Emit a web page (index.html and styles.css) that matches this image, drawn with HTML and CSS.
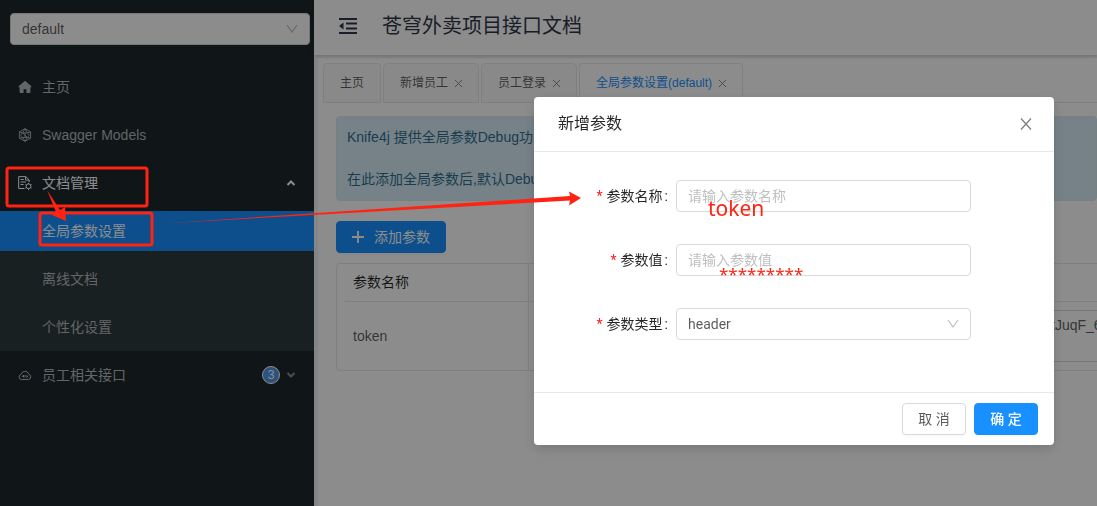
FILE: index.html
```html
<!DOCTYPE html>
<html lang="zh-CN">
<head>
<meta charset="utf-8">
<title>苍穹外卖项目接口文档</title>
<link rel="stylesheet" href="styles.css">
</head>
<body>
<div class="app">
  <aside class="sidebar">
    <div class="picker">
      <select class="group-select" aria-label="分组"><option>default</option></select>
      <svg class="chevron" viewBox="0 0 12 10" width="12" height="10"><path d="M1 1l5 7 5-7" fill="none" stroke="#bfbfbf" stroke-width="1.2"/></svg>
    </div>
    <nav class="menu">
      <a class="item" href="#home"><svg class="icon" viewBox="0 0 14 14"><path fill="currentColor" d="M7 .8L.6 6.300v1h1V12.200q0 .8.8.8H5.600V9.200h2.800V13h3.200q.8 0 .8-.8V7.300h1v-1z"/></svg>主页</a>
      <a class="item" href="#models"><svg class="icon" viewBox="0 0 14 14" fill="none" stroke="currentColor" stroke-width="0.9"><path d="M7 .7l5.600 3.200v6.300L7 13.300 1.400 10.200V3.900zM1.400 3.900l3.200 1L7 .7l2.400 4.200 3.200-1M4.600 4.900h4.800l2 2.300-2 2.300H4.600l-2-2.300zM4.600 4.900l4.800 4.600M4.600 9.500L7 13.300l2.400-3.800M1.400 10.200l3.200-.7M12.600 10.200l-3.200-.7M7 4.900v4.600"/></svg>Swagger Models</a>
      <a class="item open" href="#docs"><svg class="icon" viewBox="0 0 14 14" fill="none" stroke="currentColor"><path d="M6.500 12.500H.7V.6h7.100l3.400 3.300V6M7.600.6v3.500h3.500M2.600 3.500h3.200M2.600 6h5.400M2.600 8.500h3"/><circle cx="10.500" cy="10.300" r="2.400"/><path d="M10.500 6.800v1.200M10.500 12.600v1.200M7.400 8.500l1 .6M12.600 11.500l1 .6M7.400 12.100l1-.6M12.600 9.100l1-.6"/></svg><span class="grow">文档管理</span><svg class="arrow" viewBox="0 0 10 10"><path d="M1.500 7L5 3.500 8.500 7" fill="none" stroke="currentColor" stroke-width="2"/></svg></a>
      <div class="submenu">
        <a class="item sub active" href="#global">全局参数设置</a>
        <a class="item sub" href="#offline">离线文档</a>
        <a class="item sub" href="#custom">个性化设置</a>
      </div>
      <a class="item" href="#employee"><svg class="icon" viewBox="0 0 14 14" fill="none" stroke="currentColor"><path d="M3.300 11.500a2.600 2.600 0 01-.2-5.100 4 4 0 017.700-.3 2.800 2.800 0 01-.2 5.400zM4 9l1.500-2v2.500M7 7v2.500M8.500 7.500l1.500 2M10 7.500l-1.500 2"/></svg><span class="grow">员工相关接口</span><span class="badge">3</span><svg class="arrow dim" viewBox="0 0 10 10"><path d="M1.500 3L5 6.500 8.500 3" fill="none" stroke="currentColor" stroke-width="2"/></svg></a>
    </nav>
  </aside>
  <div class="main">
    <header class="header">
      <button class="fold" aria-label="收起菜单"><svg viewBox="0 0 18 16" width="18" height="16"><path d="M0 0h18v2H0zM7 4.600h11v2H7zM7 9.400h11v2H7zM0 14h18v2H0zM0 8l4.500-3.500v7z" fill="currentColor"/></svg></button>
      <h1 class="title">苍穹外卖项目接口文档</h1>
    </header>
    <main class="content">
      <div class="tabs">
        <div class="tab">主页</div>
        <div class="tab">新增员工<button class="x" aria-label="关闭"><svg viewBox="0 0 10 10"><path d="M1 1l8 8M9 1L1 9"/></svg></button></div>
        <div class="tab">员工登录<button class="x" aria-label="关闭"><svg viewBox="0 0 10 10"><path d="M1 1l8 8M9 1L1 9"/></svg></button></div>
        <div class="tab current">全局参数设置(default)<button class="x" aria-label="关闭"><svg viewBox="0 0 10 10"><path d="M1 1l8 8M9 1L1 9"/></svg></button></div>
        <div class="rest"></div>
      </div>
      <div class="page">
        <div class="alert"><p>Knife4j 提供全局参数Debug功能</p><p>在此添加全局参数后,默认Debug</p></div>
        <button class="btn primary add"><svg viewBox="0 0 12 12" width="12" height="12"><path d="M6 0v12M0 6h12" stroke="currentColor" stroke-width="1.800"/></svg>添加参数</button>
        <div class="table-box">
          <table class="table">
            <thead><tr><th class="name">参数名称</th><th></th></tr></thead>
            <tbody><tr><td class="name">token</td><td><textarea class="value" aria-label="参数值">tJuqF_6</textarea></td></tr></tbody>
          </table>
        </div>
      </div>
    </main>
  </div>
</div>
<div class="mask">
  <form class="modal" role="dialog" aria-labelledby="dlg">
    <div class="modal-head"><h2 id="dlg">新增参数</h2><button type="button" class="x big" aria-label="关闭"><svg viewBox="0 0 12 12"><path d="M1 .5l10 11M11 .5l-10 11"/></svg></button></div>
    <div class="modal-body">
      <div class="row"><label for="n"><i>*</i>参数名称<b>:</b></label><input id="n" class="field" placeholder="请输入参数名称"></div>
      <div class="row"><label for="v"><i>*</i>参数值<b>:</b></label><input id="v" class="field" placeholder="请输入参数值"></div>
      <div class="row"><label for="t"><i>*</i>参数类型<b>:</b></label><div class="picker-field"><select id="t" class="field"><option>header</option></select><svg class="chevron" viewBox="0 0 12 10" width="12" height="10"><path d="M1 1l5 7 5-7" fill="none" stroke="#bfbfbf" stroke-width="1.200"/></svg></div></div>
    </div>
    <div class="modal-foot"><button type="button" class="btn">取 消</button><button type="button" class="btn primary strong">确 定</button></div>
  </form>
</div>
<svg class="marks" width="1097" height="506" viewBox="0 0 1097 506" aria-hidden="true">
  <g fill="none" stroke="#ff2313" stroke-width="3"><rect x="7" y="168" width="140" height="38" rx="2"/><rect x="40" y="213" width="112" height="32" rx="2"/></g>
  <path fill="#ff2313" d="M47 190l13 20 5-3 1 14-14-6 4-3zM163 223.500L570 196l-1-4.500L581 198l-12 7.500 1-5z"/>
  <text class="note" x="708" y="216">token</text>
  <text class="stars" x="719" y="280">*********</text>
</svg>
</body>
</html>
```
FILE: styles.css
```css
* { box-sizing: border-box; }
body {
  margin: 0;
  overflow: hidden;
  font: 14px/21px "Liberation Sans", "Noto Sans CJK SC", sans-serif;
  color: rgba(0, 0, 0, .65);
}
button, input, select, textarea { font: inherit; color: inherit; margin: 0; }
h1, h2, p { margin: 0; font-weight: 400; }
a { color: inherit; text-decoration: none; }
.app { display: flex; min-height: 100vh; background: #f0f2f5; }

.sidebar { flex: 0 0 314px; background: #1e282c; color: #b4b8ba; }
.picker { position: relative; margin: 13px 4px 22px 10px; }
.group-select {
  display: block; width: 100%; height: 32px; padding: 0 11px;
  appearance: none; background: #fff; border: 1px solid #d9d9d9; border-radius: 4px;
  color: rgba(0, 0, 0, .65);
}
.chevron { position: absolute; right: 12px; top: 11px; pointer-events: none; }
.item { display: flex; align-items: center; height: 40px; margin: 0 0 8px; padding: 0 18px; }
.icon { flex: none; width: 14px; height: 14px; margin-right: 10px; }
.grow { flex: 1; }
.arrow { width: 10px; height: 10px; }
.dim { opacity: .7; }
.open { color: #fff; margin-bottom: 0; }
.submenu { padding: 8px 0 4px; margin-bottom: 4px; background: linear-gradient(#1e282c 8px, #2f3b3f 8px); }
.sub { padding-left: 42px; }
.sub:last-child { margin-bottom: 0; }
.active { background: #1890ff; color: #fff; }
.badge {
  width: 18px; height: 18px; margin-right: 6px; border: 1px solid #fff; border-radius: 9px;
  background: #5098e6; color: #fff; font-size: 12px; line-height: 16px; text-align: center;
}

.main { flex: 1; min-width: 0; display: flex; flex-direction: column; }
.header {
  display: flex; align-items: center; gap: 25px; height: 55px; padding: 0 25px 4px;
  background: #fff; box-shadow: 0 1px 4px rgba(0, 21, 41, .2); position: relative;
}
.fold { display: flex; padding: 0; border: 0; background: none; color: #303748; }
.title { font-size: 20px; line-height: 28px; color: #303748; white-space: nowrap; }
.content { flex: 1; margin: 3px 0 0 4px; background: #fff; overflow: hidden; }
.tabs { display: flex; gap: 2px; padding: 5px 0 0 5px; font-size: 12px; white-space: nowrap; }
.tab {
  display: flex; align-items: center; gap: 6px; height: 40px; min-width: 58px; padding: 0 15px 0 16px;
  border: 1px solid #e8e8e8; border-radius: 4px 4px 0 0; background: #fafafa;
}
.current { background: #fff; border-bottom-color: #fff; color: #1890ff; }
.rest { flex: 1; border-bottom: 1px solid #e8e8e8; margin-left: -2px; }
.x { display: flex; padding: 0; border: 0; background: none; color: #808080; }
.x svg { width: 9px; height: 9px; stroke: currentColor; fill: none; }
.page { padding: 13px 0 0 18px; }
.alert {
  display: flex; flex-direction: column; gap: 21px; padding: 10px; white-space: nowrap;
  border: 1px solid #d6e9f2; border-radius: 4px; background: #d9edf7; color: #31708f;
}
.btn {
  display: flex; align-items: center; justify-content: center; height: 32px; min-width: 64px; padding: 0 15px;
  border: 1px solid #d9d9d9; border-radius: 4px; background: #fff;
  box-shadow: 0 2px 0 rgba(0, 0, 0, .02);
}
.primary { background: #1890ff; border-color: #1890ff; color: #fff; }
.add { gap: 10px; margin: 20px 0 10px; }
.table-box { width: 900px; border: 1px solid #e8e8e8; border-radius: 4px; }
.table { width: 100%; border-collapse: separate; border-spacing: 0; table-layout: fixed; }
.table th, .table td { padding: 8px 16px; text-align: left; font-weight: 400; }
.table th { height: 38px; border-bottom: 1px solid #e8e8e8; color: rgba(0, 0, 0, .85); }
.table .name { width: 192px; border-right: 1px solid #e8e8e8; }
.table th.name {
  border-bottom: 0; padding-bottom: 9px;
  background: linear-gradient(#e8e8e8, #e8e8e8) 8px 100% / 100% 1px no-repeat;
}
.value {
  display: block; width: 100%; height: 52px; padding: 4px 0 0 505px; resize: none; overflow: hidden;
  border: 1px solid #d9d9d9; border-radius: 4px; background: #fff; white-space: nowrap;
}

.mask {
  position: fixed; inset: 0; display: flex; justify-content: flex-end; align-items: flex-start;
  padding: 97px 43px 0 0; background: rgba(0, 0, 0, .45);
}
.modal {
  width: 520px; background: #fff; border-radius: 4px; box-shadow: 0 4px 12px rgba(0, 0, 0, .15);
  font-family: Roboto, "Noto Sans CJK SC", sans-serif;
}
.modal-head {
  display: flex; align-items: center; justify-content: space-between; height: 55px; padding: 0 22px 0 24px;
  border-bottom: 1px solid #e8e8e8;
}
.modal-head h2 { font-size: 16px; line-height: 22px; color: rgba(0, 0, 0, .85); }
.big svg { width: 12px; height: 12px; stroke-width: 1.3; }
.modal-body { display: flex; flex-direction: column; gap: 32px; padding: 28px 83px 52px 24px; }
.row { display: grid; grid-template-columns: 1fr 295px; align-items: center; gap: 8px; }
.row label { text-align: right; color: rgba(0, 0, 0, .85); }
.row i { margin-right: 4px; color: #f5222d; font-style: normal; }
.row b { margin-left: 2px; font-weight: 400; }
.field {
  display: block; width: 100%; height: 32px; padding: 0 11px; appearance: none;
  border: 1px solid #d9d9d9; border-radius: 4px; background: #fff;
}
.field::placeholder { color: #bfbfbf; }
.picker-field { position: relative; }
.modal-foot { display: flex; justify-content: flex-end; gap: 8px; padding: 10px 16px; border-top: 1px solid #e8e8e8; }
.strong { font-weight: 500; }

.marks { position: absolute; left: 0; top: 0; pointer-events: none; }
.marks text { fill: #ff2313; font-family: "Noto Sans", sans-serif; }
.note { font-size: 21px; }
.stars { font-size: 17px; }
```
